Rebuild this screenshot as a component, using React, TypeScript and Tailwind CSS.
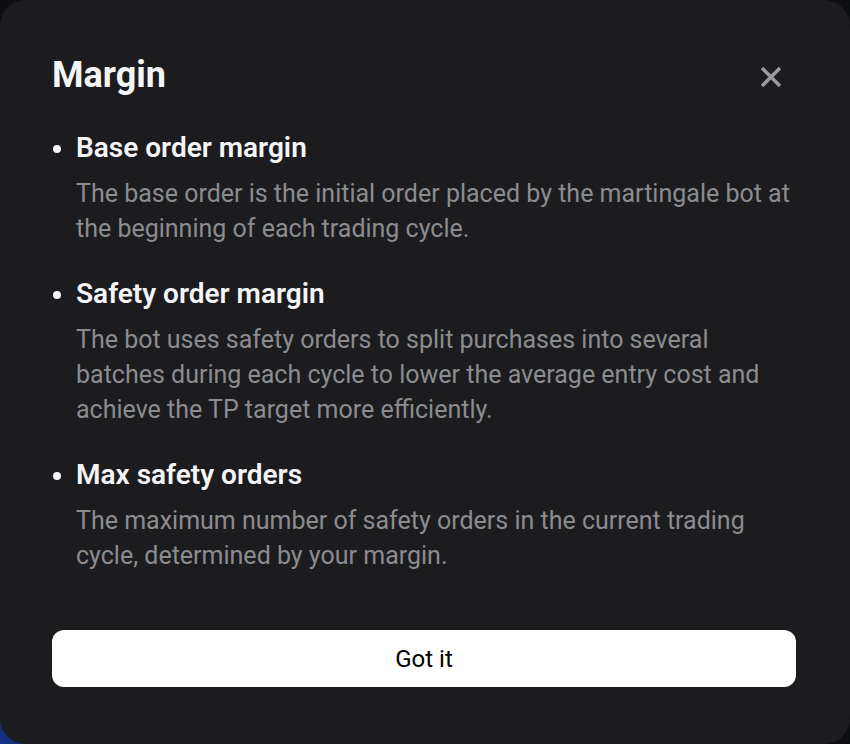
interface Item {
  title: string;
  body: string;
}

const items: Item[] = [
  {
    title: 'Base order margin',
    body: 'The base order is the initial order placed by the martingale bot at the beginning of each trading cycle.',
  },
  {
    title: 'Safety order margin',
    body: 'The bot uses safety orders to split purchases into several batches during each cycle to lower the average entry cost and achieve the TP target more efficiently.',
  },
  {
    title: 'Max safety orders',
    body: 'The maximum number of safety orders in the current trading cycle, determined by your margin.',
  },
];

export default function App() {
  return (
    <div className="w-[850px] h-[744px] bg-linear-to-tr from-[#17338f] from-0% via-[#0e0f12] via-6% to-[#0e0f12] font-['Roboto',sans-serif]">
      <div className="h-full rounded-[26px] bg-[#1c1c1f] pt-[55px] pl-[52px] pr-[54px] flex flex-col">
        <div className="flex items-center justify-between h-[40px]">
          <h1 className="text-[36px] leading-[40px] font-bold text-[#f5f5f7]">Margin</h1>
          <button className="mr-[14px] mt-[4px] text-[#9a9b9f]">
            <svg width="22" height="22" viewBox="0 0 22 22" fill="none" stroke="currentColor" strokeWidth="3.5">
              <path d="M2 2L20 20M20 2L2 20" />
            </svg>
          </button>
        </div>

        <ul className="mt-[35px] flex flex-col gap-[30px]">
          {items.map((item) => (
            <li key={item.title} className="flex">
              <span className="w-[24px] pt-[15px] pl-[1px] shrink-0">
                <span className="block w-[8px] h-[8px] rounded-full bg-[#f5f5f7]" />
              </span>
              <div className="flex flex-col gap-[10px]">
                <h2 className="text-[28px] leading-[36px] font-semibold text-[#f5f5f7]">{item.title}</h2>
                <p className="text-[25px] leading-[35px] text-[#8b8c90]">{item.body}</p>
              </div>
            </li>
          ))}
        </ul>

        <button className="mt-[57px] h-[57px] w-full rounded-[12px] bg-white text-[24px] text-black">
          Got it
        </button>
      </div>
    </div>
  );
}
